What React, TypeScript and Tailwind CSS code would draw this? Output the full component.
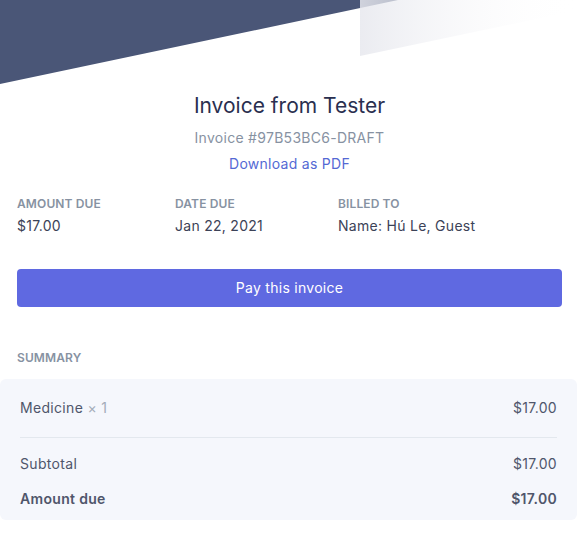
const Banner = () => (
  <svg
    className="absolute top-0 left-0"
    width="579"
    height="90"
    viewBox="0 0 579 90"
  >
    <defs>
      <linearGradient id="fade" x1="0" y1="0" x2="1" y2="0">
        <stop offset="0" stopColor="#e7e8ee" stopOpacity="0.85" />
        <stop offset="1" stopColor="#ffffff" stopOpacity="0" />
      </linearGradient>
    </defs>
    <polygon points="0,0 398,0 0,84" fill="#4a5677" />
    <polygon points="360,0 579,0 579,10 360,56" fill="url(#fade)" />
  </svg>
);

const Meta = ({ label, value }: { label: string; value: string }) => (
  <div className="flex flex-col gap-1">
    <span className="text-[12px] leading-4 font-semibold uppercase tracking-[0.01em] text-[#8792a2]">
      {label}
    </span>
    <span className="text-[14px] leading-5 tracking-[0.02em] text-[#3c4257]">{value}</span>
  </div>
);

export default function App() {
  return (
    <div className="relative w-[579px] h-[547px] overflow-hidden bg-white font-['Inter',sans-serif]">
      <Banner />
      <div className="relative pt-[92px]">
        <div className="flex flex-col items-center px-[17px]">
          <h1 className="text-[21px] leading-7 text-[#2a2f4f]">Invoice from Tester</h1>
          <p className="mt-2 text-[14px] leading-5 tracking-[0.02em] text-[#8792a2]">
            Invoice #97B53BC6-DRAFT
          </p>
          <a className="mt-1.5 text-[14px] leading-5 tracking-[0.02em] text-[#5469d4]" href="#">
            Download as PDF
          </a>
        </div>

        <div className="mt-[22px] grid grid-cols-[158px_163px_1fr] px-[17px]">
          <Meta label="Amount due" value="$17.00" />
          <Meta label="Date due" value="Jan 22, 2021" />
          <Meta label="Billed to" value="Name: Hú Le, Guest" />
        </div>

        <div className="px-[17px] mt-[33px]">
          <button className="w-full h-[38px] rounded-[4px] bg-[#5f69e1] text-white text-[14px] leading-5 tracking-[0.02em]">
            Pay this invoice
          </button>
        </div>

        <div className="mt-[43px] px-[17px] text-[12px] leading-4 font-semibold uppercase tracking-[0.01em] text-[#8792a2]">
          Summary
        </div>

        <div className="mt-[13px] mr-[2px] rounded-[6px] bg-[#f5f7fc] px-5 pt-[19px] pb-[11px] tracking-[0.02em]">
          <div className="flex justify-between text-[14px] leading-5 text-[#4f566b]">
            <span>
              Medicine <span className="text-[#a3acb9]">× 1</span>
            </span>
            <span>$17.00</span>
          </div>
          <div className="mt-[19px] border-t border-[#e3e8ee]" />
          <div className="mt-[16px] flex justify-between text-[14px] leading-5 text-[#4f566b]">
            <span>Subtotal</span>
            <span>$17.00</span>
          </div>
          <div className="mt-[15px] flex justify-between text-[14px] leading-5 font-semibold text-[#4f566b]">
            <span>Amount due</span>
            <span>$17.00</span>
          </div>
        </div>
      </div>
    </div>
  );
}
